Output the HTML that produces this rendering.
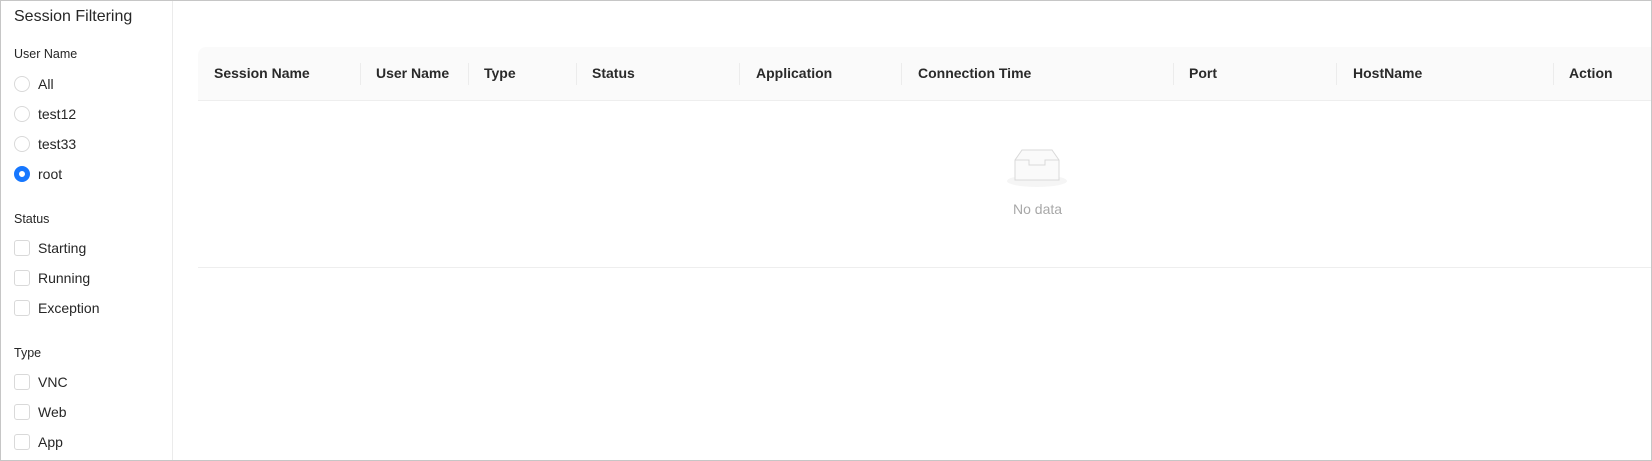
<!DOCTYPE html>
<html><head><style>
*{margin:0;padding:0;box-sizing:border-box}
body{width:1652px;height:461px;overflow:hidden;background:#fff;font-family:"Liberation Sans",sans-serif;color:#262626;position:relative}
.frame{position:absolute;left:0;top:0;width:1652px;height:461px;border:1px solid #c6c6c6}
.side{position:absolute;left:0;top:0;width:173px;height:461px;border-right:1px solid #ebebeb}
.abs{position:absolute;white-space:nowrap}
.t{font-size:16px;left:14px;top:8px}
.lbl{font-size:12.5px;left:14px}
.it{font-size:14px;left:38px}
.rd{position:absolute;left:14px;width:16px;height:16px;border:1px solid #d9d9d9;border-radius:50%;background:#fff}
.rd.on{border:5px solid #1677ff}
.cb{position:absolute;left:14px;width:16px;height:16px;border:1px solid #d9d9d9;border-radius:3px;background:#fff}
.hd{position:absolute;left:198px;top:47px;width:1453px;height:54px;background:#fafafa;border-bottom:1px solid #eee;border-top-left-radius:8px}
.hd span{position:absolute;top:18px;font-size:14px;font-weight:bold;color:#2a2a2a}
.hd i{position:absolute;top:16px;width:1px;height:22px;background:#ececec}
.line{position:absolute;left:198px;top:267px;width:1453px;height:1px;background:#eee}
</style></head><body>
<div class="side">
<div class="abs t">Session Filtering</div>
<div class="abs lbl" style="top:47px">User Name</div>
<div class="rd" style="top:76px"></div><div class="abs it" style="top:76px">All</div>
<div class="rd" style="top:106px"></div><div class="abs it" style="top:106px">test12</div>
<div class="rd" style="top:136px"></div><div class="abs it" style="top:136px">test33</div>
<div class="rd on" style="top:166px"></div><div class="abs it" style="top:166px">root</div>
<div class="abs lbl" style="top:212px">Status</div>
<div class="cb" style="top:240px"></div><div class="abs it" style="top:240px">Starting</div>
<div class="cb" style="top:270px"></div><div class="abs it" style="top:270px">Running</div>
<div class="cb" style="top:300px"></div><div class="abs it" style="top:300px">Exception</div>
<div class="abs lbl" style="top:346px">Type</div>
<div class="cb" style="top:374px"></div><div class="abs it" style="top:374px">VNC</div>
<div class="cb" style="top:404px"></div><div class="abs it" style="top:404px">Web</div>
<div class="cb" style="top:434px"></div><div class="abs it" style="top:434px">App</div>
</div>
<div class="hd">
<span style="left:16px">Session Name</span><i style="left:162px"></i>
<span style="left:178px">User Name</span><i style="left:270px"></i>
<span style="left:286px">Type</span><i style="left:378px"></i>
<span style="left:394px">Status</span><i style="left:541px"></i>
<span style="left:558px">Application</span><i style="left:703px"></i>
<span style="left:720px">Connection Time</span><i style="left:975px"></i>
<span style="left:991px">Port</span><i style="left:1138px"></i>
<span style="left:1155px">HostName</span><i style="left:1355px"></i>
<span style="left:1371px">Action</span>
</div>
<svg class="abs" style="left:1005px;top:146px" width="64" height="42" viewBox="0 0 64 42">
<ellipse cx="32" cy="35" rx="30" ry="6" fill="#f5f5f5"/>
<path d="M10 14 L17 4 H47 L54 14 V34 H10 Z" fill="#fafafa" stroke="#d9d9d9"/>
<path d="M10 14 H24 V19 H40 V14 H54" fill="none" stroke="#d9d9d9"/>
</svg>
<div class="abs" style="left:1013px;top:201px;font-size:14px;color:#a8a8a8">No data</div>
<div class="line"></div>
<div class="frame"></div>
</body></html>
